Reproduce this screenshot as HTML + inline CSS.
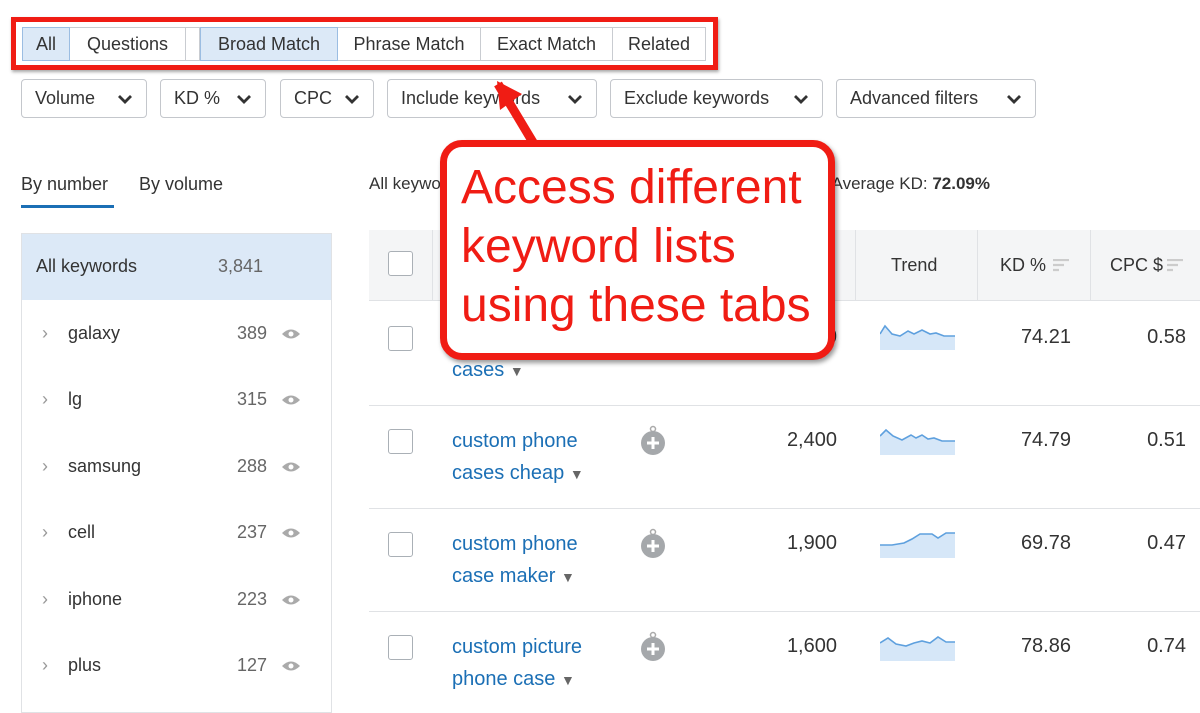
<!DOCTYPE html>
<html><head><meta charset="utf-8"><style>
*{margin:0;padding:0;box-sizing:border-box}
body{width:1200px;height:705px;overflow:hidden;background:#fff;font-family:"Liberation Sans","DejaVu Sans",sans-serif;color:#333;position:relative}
.a{position:absolute}
.tab{position:absolute;top:27px;height:34px;border:1px solid #c9ccd1;border-left:none;font-size:18px;line-height:32px;text-align:center;color:#333;background:#fff}
.tab.s{background:#dce9f7;border-color:#9bbde2}
.btn{position:absolute;top:79px;height:39px;border:1px solid #c4c7cc;border-radius:4px;font-size:18px;line-height:37px;padding-left:13px;color:#333}
.btn svg{position:absolute;right:13px;top:14px}
.lrow{position:absolute;left:22px;width:309px;height:66px;font-size:18px}
.lrow .n{position:absolute;left:46px;top:22px}
.lrow .c{position:absolute;right:64px;top:22px;color:#666}
.lrow .ch{position:absolute;left:20px;top:22px;color:#999}
.eye{position:absolute;right:30px;top:27px}
.cb{position:absolute;left:388px;width:25px;height:25px;border:1px solid #aab0b6;border-radius:3px;background:#fff}
.kw{position:absolute;left:452px;font-size:20px;color:#1b6fb5;line-height:32px}
.num{position:absolute;font-size:20px;color:#333;text-align:right}
.plus{position:absolute;left:640px}
.sep{position:absolute;left:369px;width:831px;height:1px;background:#e0e2e5}
</style></head><body>

<div class="tab s" style="left:22px;width:48px;border-left:1px solid #9bbde2">All</div>
<div class="tab" style="left:70px;width:116px">Questions</div>
<div class="tab" style="left:186px;width:14px;border-left:none"></div>
<div class="tab s" style="left:200px;width:138px;border-left:1px solid #9bbde2">Broad Match</div>
<div class="tab" style="left:338px;width:143px">Phrase Match</div>
<div class="tab" style="left:481px;width:132px">Exact Match</div>
<div class="tab" style="left:613px;width:93px">Related</div>
<div class="a" style="left:11px;top:17px;width:707px;height:53px;border:5px solid #f01c14;box-shadow:1px 2px 3px rgba(0,0,0,.35)"></div>

<div class="btn" style="left:21px;width:126px">Volume<svg width="16" height="11"><path d="M2 2l6 6 6-6" stroke="#333" stroke-width="2.8" fill="none"/></svg></div>
<div class="btn" style="left:160px;width:106px">KD %<svg width="16" height="11"><path d="M2 2l6 6 6-6" stroke="#333" stroke-width="2.8" fill="none"/></svg></div>
<div class="btn" style="left:280px;width:94px">CPC<svg width="16" height="11"><path d="M2 2l6 6 6-6" stroke="#333" stroke-width="2.8" fill="none"/></svg></div>
<div class="btn" style="left:387px;width:210px">Include keywords<svg width="16" height="11"><path d="M2 2l6 6 6-6" stroke="#333" stroke-width="2.8" fill="none"/></svg></div>
<div class="btn" style="left:610px;width:213px">Exclude keywords<svg width="16" height="11"><path d="M2 2l6 6 6-6" stroke="#333" stroke-width="2.8" fill="none"/></svg></div>
<div class="btn" style="left:836px;width:200px">Advanced filters<svg width="16" height="11"><path d="M2 2l6 6 6-6" stroke="#333" stroke-width="2.8" fill="none"/></svg></div>

<div class="a" style="left:21px;top:174px;font-size:18px">By number</div>
<div class="a" style="left:21px;top:205px;width:93px;height:3px;background:#1b6fb5"></div>
<div class="a" style="left:139px;top:174px;font-size:18px">By volume</div>
<div class="a" style="left:21px;top:233px;width:311px;height:480px;border:1px solid #e0e2e5"></div>
<div class="lrow" style="top:234px;background:#dce9f7;height:66px"><span class="a" style="left:14px;top:22px">All keywords</span><span class="c" style="right:68px">3,841</span></div>
<div class="lrow" style="top:301px"><span class="ch">›</span><span class="n">galaxy</span><span class="c">389</span><svg class="eye" width="20" height="12"><path d="M1 6Q10-3 19 6Q10 15 1 6Z" fill="#aaa"/><circle cx="10" cy="6" r="2.5" fill="#fff"/></svg></div>
<div class="lrow" style="top:367px"><span class="ch">›</span><span class="n">lg</span><span class="c">315</span><svg class="eye" width="20" height="12"><path d="M1 6Q10-3 19 6Q10 15 1 6Z" fill="#aaa"/><circle cx="10" cy="6" r="2.5" fill="#fff"/></svg></div>
<div class="lrow" style="top:434px"><span class="ch">›</span><span class="n">samsung</span><span class="c">288</span><svg class="eye" width="20" height="12"><path d="M1 6Q10-3 19 6Q10 15 1 6Z" fill="#aaa"/><circle cx="10" cy="6" r="2.5" fill="#fff"/></svg></div>
<div class="lrow" style="top:500px"><span class="ch">›</span><span class="n">cell</span><span class="c">237</span><svg class="eye" width="20" height="12"><path d="M1 6Q10-3 19 6Q10 15 1 6Z" fill="#aaa"/><circle cx="10" cy="6" r="2.5" fill="#fff"/></svg></div>
<div class="lrow" style="top:567px"><span class="ch">›</span><span class="n">iphone</span><span class="c">223</span><svg class="eye" width="20" height="12"><path d="M1 6Q10-3 19 6Q10 15 1 6Z" fill="#aaa"/><circle cx="10" cy="6" r="2.5" fill="#fff"/></svg></div>
<div class="lrow" style="top:633px"><span class="ch">›</span><span class="n">plus</span><span class="c">127</span><svg class="eye" width="20" height="12"><path d="M1 6Q10-3 19 6Q10 15 1 6Z" fill="#aaa"/><circle cx="10" cy="6" r="2.5" fill="#fff"/></svg></div>

<div class="a" style="left:369px;top:174px;font-size:17px">All keywords: 3,841</div>
<div class="a" style="left:790px;top:174px;width:200px;text-align:right;font-size:17px">Average KD: <b>72.09%</b></div>

<div class="a" style="left:369px;top:230px;width:831px;height:71px;background:#f4f5f6;border-bottom:1px solid #e0e2e5"></div>
<div class="a" style="left:432px;top:230px;width:1px;height:70px;background:#e0e2e5"></div>
<div class="a" style="left:855px;top:230px;width:1px;height:70px;background:#e0e2e5"></div>
<div class="a" style="left:977px;top:230px;width:1px;height:70px;background:#e0e2e5"></div>
<div class="a" style="left:1090px;top:230px;width:1px;height:70px;background:#e0e2e5"></div>
<div class="cb" style="top:251px"></div>
<div class="a" style="left:891px;top:255px;font-size:18px">Trend</div>
<div class="a" style="left:1000px;top:255px;font-size:18px">KD %</div>
<svg class="a" style="left:1053px;top:259px" width="16" height="14"><path d="M0 1h16M0 6h11M0 11h6" stroke="#ccc" stroke-width="2.2"/></svg>
<div class="a" style="left:1110px;top:255px;font-size:18px">CPC $</div>
<svg class="a" style="left:1167px;top:259px" width="16" height="14"><path d="M0 1h16M0 6h11M0 11h6" stroke="#ccc" stroke-width="2.2"/></svg>

<div class="cb" style="top:326px"></div>
<div class="kw" style="top:322px">custom phone<br>cases <span style="color:#666;font-size:14px">▼</span></div>
<div class="num" style="left:760px;top:326px;width:77px">3,600</div>
<div class="num" style="left:990px;top:326px;width:81px">74.21</div>
<div class="num" style="left:1110px;top:326px;width:76px">0.58</div>
<svg class="a" style="left:880px;top:322px" width="76" height="28"><path d="M0 12L5 4 12 12 20 14 28 9 34 12 42 8 50 12 56 11 64 14 75 14V28H0Z" fill="#d6e7f8"/><path d="M0 12L5 4 12 12 20 14 28 9 34 12 42 8 50 12 56 11 64 14 75 14" stroke="#5ea0de" stroke-width="1.6" fill="none"/></svg>
<div class="sep" style="top:405px"></div>

<div class="cb" style="top:429px"></div>
<div class="kw" style="top:425px">custom phone<br>cases cheap <span style="color:#666;font-size:14px">▼</span></div>
<svg class="plus" style="top:424px" width="28" height="34"><circle cx="13" cy="5" r="2.5" fill="none" stroke="#aaa" stroke-width="1.5"/><circle cx="13" cy="19" r="12" fill="#a5a8ab"/><path d="M13 13v12M7 19h12" stroke="#fff" stroke-width="3"/></svg>
<div class="num" style="left:760px;top:429px;width:77px">2,400</div>
<div class="num" style="left:990px;top:429px;width:81px">74.79</div>
<div class="num" style="left:1110px;top:429px;width:76px">0.51</div>
<svg class="a" style="left:880px;top:427px" width="76" height="28"><path d="M0 9L6 3 13 9 22 13 31 8 36 11 42 8 48 12 54 11 62 14 75 14V28H0Z" fill="#d6e7f8"/><path d="M0 9L6 3 13 9 22 13 31 8 36 11 42 8 48 12 54 11 62 14 75 14" stroke="#5ea0de" stroke-width="1.6" fill="none"/></svg>
<div class="sep" style="top:508px"></div>

<div class="cb" style="top:532px"></div>
<div class="kw" style="top:528px">custom phone<br>case maker <span style="color:#666;font-size:14px">▼</span></div>
<svg class="plus" style="top:527px" width="28" height="34"><circle cx="13" cy="5" r="2.5" fill="none" stroke="#aaa" stroke-width="1.5"/><circle cx="13" cy="19" r="12" fill="#a5a8ab"/><path d="M13 13v12M7 19h12" stroke="#fff" stroke-width="3"/></svg>
<div class="num" style="left:760px;top:532px;width:77px">1,900</div>
<div class="num" style="left:990px;top:532px;width:81px">69.78</div>
<div class="num" style="left:1110px;top:532px;width:76px">0.47</div>
<svg class="a" style="left:880px;top:530px" width="76" height="28"><path d="M0 15L12 15 24 13 32 9 40 4 52 4 58 8 66 3 75 3V28H0Z" fill="#d6e7f8"/><path d="M0 15L12 15 24 13 32 9 40 4 52 4 58 8 66 3 75 3" stroke="#5ea0de" stroke-width="1.6" fill="none"/></svg>
<div class="sep" style="top:611px"></div>

<div class="cb" style="top:635px"></div>
<div class="kw" style="top:631px">custom picture<br>phone case <span style="color:#666;font-size:14px">▼</span></div>
<svg class="plus" style="top:630px" width="28" height="34"><circle cx="13" cy="5" r="2.5" fill="none" stroke="#aaa" stroke-width="1.5"/><circle cx="13" cy="19" r="12" fill="#a5a8ab"/><path d="M13 13v12M7 19h12" stroke="#fff" stroke-width="3"/></svg>
<div class="num" style="left:760px;top:635px;width:77px">1,600</div>
<div class="num" style="left:990px;top:635px;width:81px">78.86</div>
<div class="num" style="left:1110px;top:635px;width:76px">0.74</div>
<svg class="a" style="left:880px;top:633px" width="76" height="28"><path d="M0 10L8 5 16 11 26 13 34 10 42 8 50 10 58 4 66 9 75 9V28H0Z" fill="#d6e7f8"/><path d="M0 10L8 5 16 11 26 13 34 10 42 8 50 10 58 4 66 9 75 9" stroke="#5ea0de" stroke-width="1.6" fill="none"/></svg>

<svg class="a" style="left:480px;top:78px" width="70" height="72"><path d="M18 6L54 66" stroke="#f01c14" stroke-width="9"/><path d="M17 3L42 16 20 32Z" fill="#f01c14"/></svg>
<div class="a" style="left:440px;top:140px;width:395px;height:220px;border:7px solid #f01c14;border-radius:22px;background:#fff;box-shadow:2px 3px 5px rgba(0,0,0,.4)"></div>
<div class="a" style="left:461px;top:158px;font-size:48px;line-height:59px;color:#f01c14;font-family:'Liberation Sans',Arial,sans-serif;white-space:nowrap">Access different<br>keyword lists<br>using these tabs</div>
</body></html>
